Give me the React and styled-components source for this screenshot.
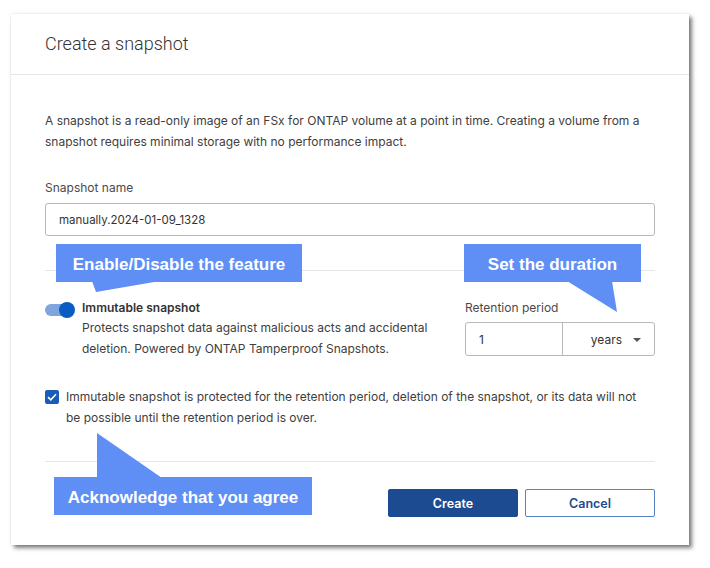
import React from "react";
import styled, { createGlobalStyle } from "styled-components";

const Global = createGlobalStyle`
  html, body { margin: 0; padding: 0; background: #ffffff; }
  body { font-family: Inter, "Noto Sans", sans-serif; color: #3d3d3d; }
  * { box-sizing: border-box; }
`;

const Page = styled.div`
  position: relative;
  width: 710px;
  height: 568px;
  padding: 14px 0 0 11px;
`;

const Dialog = styled.div`
  width: 678px;
  height: 531px;
  background: #fff;
  box-shadow: 3px 3px 4px rgba(0, 0, 0, 0.5), 0 0 2px rgba(0, 0, 0, 0.12);
  display: flex;
  flex-direction: column;
`;

const Header = styled.div`
  height: 61px;
  padding: 0 34px 1px;
  display: flex;
  align-items: center;
  border-bottom: 1px solid #e6e6e6;
  font-family: Roboto, "Liberation Sans", sans-serif;
  font-weight: 300;
  font-size: 18px;
  color: #333;
`;

const Body = styled.div`
  padding: 0 34px 28px;
  display: flex;
  flex-direction: column;
  flex: 1;
`;

const Text = styled.p`
  margin: ${(p) => p.$mt || 0}px 0 0;
  font-size: 12px;
  line-height: 21px;
  color: #404040;
  white-space: nowrap;
`;

const Label = styled.div`
  margin-top: ${(p) => p.$mt || 0}px;
  font-size: 12px;
  line-height: 18px;
  color: #4a4a4a;
`;

const TextInput = styled.div`
  margin-top: ${(p) => p.$mt || 0}px;
  height: ${(p) => p.$h || 33}px;
  border: 1px solid #b8b8b8;
  border-radius: 3px;
  display: flex;
  align-items: center;
  padding-left: 13px;
  font-size: 11.5px;
  color: #333;
`;

const Divider = styled.div`
  margin-top: ${(p) => p.$mt}px;
  height: 1px;
  background: #e6e6e6;
`;

const FeatureRow = styled.div`
  margin-top: 28px;
  display: flex;
  justify-content: space-between;
`;

const FeatureLeft = styled.div`
  display: flex;
  gap: 6px;
`;

const Toggle = styled.div`
  position: relative;
  width: 31px;
  height: 18px;
  flex: none;
  &::before {
    content: "";
    position: absolute;
    left: 0;
    top: 5px;
    width: 28px;
    height: 12px;
    border-radius: 6px;
    background: #7ea6dc;
  }
  &::after {
    content: "";
    position: absolute;
    left: 14px;
    top: 3px;
    width: 16px;
    height: 16px;
    border-radius: 50%;
    background: #0a5cc2;
  }
`;

const FeatureTitle = styled.div`
  font-size: 12px;
  line-height: 18px;
  font-weight: 600;
  color: #333;
`;

const FeatureRight = styled.div`
  width: 190px;
  display: flex;
  flex-direction: column;
`;

const Group = styled.div`
  margin-top: 5px;
  height: 34px;
  border: 1px solid #b8b8b8;
  border-radius: 3px;
  display: grid;
  grid-template-columns: 97px 1fr;
  font-size: 12px;
  color: #333;
`;

const GroupNum = styled.div`
  display: flex;
  align-items: center;
  padding-left: 13px;
  border-right: 1px solid #b8b8b8;
`;

const GroupUnit = styled.div`
  display: flex;
  align-items: center;
  justify-content: flex-end;
  gap: 11px;
  padding-right: 13px;
`;

const Caret = styled.span`
  width: 0;
  height: 0;
  border-left: 4px solid transparent;
  border-right: 4px solid transparent;
  border-top: 4px solid #555;
  margin-top: 1px;
`;

const CheckRow = styled.div`
  margin-top: 27px;
  display: flex;
  gap: 7px;
`;

const Box = styled.div`
  width: 14px;
  height: 14px;
  margin-top: 4px;
  flex: none;
  border-radius: 2px;
  background: #1a5db8;
  display: flex;
  align-items: center;
  justify-content: center;
`;

const Actions = styled.div`
  margin-top: 27px;
  display: flex;
  justify-content: flex-end;
  gap: 7px;
`;

const Button = styled.button`
  width: 130px;
  height: 28px;
  border-radius: 2px;
  font-family: Inter, "Noto Sans", sans-serif;
  font-size: 12.5px;
  font-weight: 600;
  cursor: pointer;
  border: 1px solid ${(p) => (p.$primary ? "#1d4b91" : "#5682c6")};
  background: ${(p) => (p.$primary ? "#1d4b91" : "#fff")};
  color: ${(p) => (p.$primary ? "#fff" : "#1d4b91")};
`;

/* annotation callouts laid over the dialog */
const Callout = styled.div`
  position: absolute;
  left: ${(p) => p.$x}px;
  top: ${(p) => p.$y}px;
  width: ${(p) => p.$w}px;
  height: 38px;
  padding-top: 3px;
  background: #5f8ef5;
  color: #fff;
  font-family: "Liberation Sans", Arial, sans-serif;
  font-weight: 700;
  font-size: 17px;
  display: flex;
  align-items: center;
  justify-content: center;
`;

const Tail = styled.svg`
  position: absolute;
  left: 0;
  top: 0;
  overflow: visible;
  pointer-events: none;
`;

function Annotation({ x, y, w, points, children }) {
  return (
    <Callout $x={x} $y={y} $w={w}>
      <Tail width="1" height="1">
        <polygon points={points} fill="#5f8ef5" />
      </Tail>
      {children}
    </Callout>
  );
}

export default function App() {
  return (
    <Page>
      <Global />
      <Dialog>
        <Header>Create a snapshot</Header>
        <Body>
          <Text $mt={35}>
            A snapshot is a read-only image of an FSx for ONTAP volume at a point in time. Creating a volume from a
            <br />
            snapshot requires minimal storage with no performance impact.
          </Text>
          <Label $mt={27}>Snapshot name</Label>
          <TextInput $mt={6}>manually.2024-01-09_1328</TextInput>
          <Divider $mt={34} />
          <FeatureRow>
            <FeatureLeft>
              <Toggle />
              <div>
                <FeatureTitle>Immutable snapshot</FeatureTitle>
                <Text>
                  Protects snapshot data against malicious acts and accidental
                  <br />
                  deletion. Powered by ONTAP Tamperproof Snapshots.
                </Text>
              </div>
            </FeatureLeft>
            <FeatureRight>
              <Label>Retention period</Label>
              <Group>
                <GroupNum>1</GroupNum>
                <GroupUnit>
                  years
                  <Caret />
                </GroupUnit>
              </Group>
            </FeatureRight>
          </FeatureRow>
          <CheckRow>
            <Box>
              <svg width="10" height="8" viewBox="0 0 10 8">
                <path d="M1 4.2 L3.8 6.8 L9 1.2" fill="none" stroke="#fff" strokeWidth="1.6" />
              </svg>
            </Box>
            <Text>
              Immutable snapshot is protected for the retention period, deletion of the snapshot, or its data will not
              <br />
              be possible until the retention period is over.
            </Text>
          </CheckRow>
          <Divider $mt={33} />
          <Actions>
            <Button $primary>Create</Button>
            <Button>Cancel</Button>
          </Actions>
        </Body>
      </Dialog>

      <Annotation x={56} y={244} w={246} points="36,37 40,48 104,37">
        Enable/Disable the feature
      </Annotation>
      <Annotation x={464} y={244} w={177} points="103,37 148,37 153,68">
        Set the duration
      </Annotation>
      <Annotation x={54} y={477} w={258} points="43,1 43,-44 108,1">
        Acknowledge that you agree
      </Annotation>
    </Page>
  );
}
